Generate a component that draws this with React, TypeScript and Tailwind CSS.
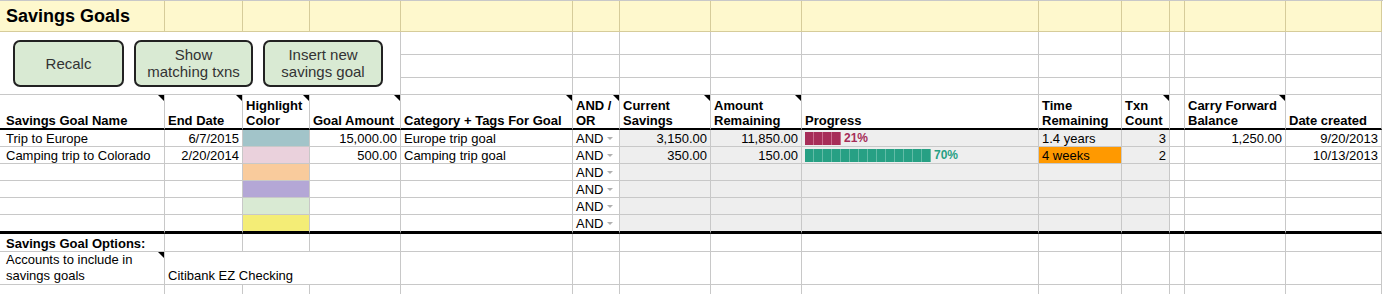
import React from "react";

type CellProps = {
  children?: React.ReactNode;
  className?: string;
  r?: string;
  b?: string;
  tri?: boolean;
};

function Cell({ children, className = "", r = "border-r border-r-[#c8c8c8]", b = "border-b border-b-[#c8c8c8]", tri }: CellProps) {
  return (
    <div className={"relative flex min-w-0 whitespace-nowrap " + r + " " + b + " " + className}>
      {children}
      {tri && (
        <span className="absolute right-0 top-0 h-0 w-0 border-l-[6px] border-t-[6px] border-l-transparent border-t-black" />
      )}
    </div>
  );
}

const GREY_B = "border-b border-b-[#c8c8c8]";
const HEAD_B = "border-b-2 border-b-black";
const LAST_B = "border-b-[3px] border-b-black";

function Btn({ children, w }: { children: React.ReactNode; w: string }) {
  return (
    <div
      className={
        "flex h-[47px] items-center justify-center rounded-[7px] border-2 border-[#222] bg-[#d9ead3] text-center text-[15px] leading-[17px] text-[#333] " +
        w
      }
    >
      {children}
    </div>
  );
}

function Bar({ n, fill, sep, text, tc }: { n: number; fill: string; sep: string; text: string; tc: string }) {
  const segs = Array.from({ length: n });
  return (
    <div className="flex items-center gap-[3px] pl-[3px]">
      <div className="flex h-[13px]">
        {segs.map((_, i) => (
          <div key={i} className={"h-full w-[9px] border-r " + fill + " " + sep} />
        ))}
      </div>
      <span className={"text-[12px] font-bold leading-[15px] " + tc}>{text}</span>
    </div>
  );
}

const colors = ["bg-[#a2c4c9]", "bg-[#ead1dc]", "bg-[#f9cb9c]", "bg-[#b4a7d6]", "bg-[#d9ead3]", "bg-[#f4ed76]"];

type Row = {
  name?: string;
  end?: string;
  goal?: string;
  cat?: string;
  cur?: string;
  rem?: string;
  prog?: React.ReactNode;
  time?: string;
  timeOrange?: boolean;
  txn?: string;
  carry?: string;
  created?: string;
};

const rows: Row[] = [
  {
    name: "Trip to Europe",
    end: "6/7/2015",
    goal: "15,000.00",
    cat: "Europe trip goal",
    cur: "3,150.00",
    rem: "11,850.00",
    prog: <Bar n={4} fill="bg-[#a62d58]" sep="border-r-[#c9698b]" text="21%" tc="text-[#a62d58]" />,
    time: "1.4 years",
    txn: "3",
    carry: "1,250.00",
    created: "9/20/2013",
  },
  {
    name: "Camping trip to Colorado",
    end: "2/20/2014",
    goal: "500.00",
    cat: "Camping trip goal",
    cur: "350.00",
    rem: "150.00",
    prog: <Bar n={14} fill="bg-[#27a084]" sep="border-r-[#62bba6]" text="70%" tc="text-[#27a084]" />,
    time: "4 weeks",
    timeOrange: true,
    txn: "2",
    created: "10/13/2013",
  },
  {},
  {},
  {},
  {},
];

const T = "text-[13px] leading-[15px] text-black";

export default function App() {
  return (
    <div className="h-[294px] w-[1383px] overflow-hidden bg-white font-['Liberation_Sans',Arial,sans-serif]">
      <div className="grid grid-cols-[165px_78px_67px_91px_172px_47px_91px_91px_237px_83px_48px_15px_101px_96px] grid-rows-[31px_23px_23px_17px_35px_17px_17px_17px_17px_17px_19px_18px_33px_17px] border-t border-t-[#c8c8c8]">
        {/* Title row */}
        {Array.from({ length: 14 }).map((_, i) => (
          <Cell
            key={"t" + i}
            r="border-r border-r-[#d6cc9a]"
            b="border-b border-b-[#d6cc9a]"
            className="items-center bg-[#fef8cd]"
          >
            {i === 0 && <span className="pl-[6px] text-[18px] font-bold leading-[21px] text-black">Savings Goals</span>}
          </Cell>
        ))}

        {/* Button area */}
        <Cell className="col-span-4 row-span-3 items-center gap-[10px] pl-[13px]">
          <Btn w="w-[111px]">Recalc</Btn>
          <Btn w="w-[119px]">
            Show
            <br />
            matching txns
          </Btn>
          <Btn w="w-[120px]">
            Insert new
            <br />
            savings goal
          </Btn>
        </Cell>
        {Array.from({ length: 30 }).map((_, i) => (
          <Cell key={"e" + i} />
        ))}

        {/* Header row */}
        <Cell b={HEAD_B} tri className={"items-end pl-[6px] font-bold " + T}>Savings Goal Name</Cell>
        <Cell b={HEAD_B} tri className={"items-end px-[3px] font-bold " + T}>End Date</Cell>
        <Cell b={HEAD_B} tri className={"items-end px-[3px] font-bold " + T}>
          <span>
            Highlight
            <br />
            Color
          </span>
        </Cell>
        <Cell b={HEAD_B} tri className={"items-end px-[3px] font-bold " + T}>Goal Amount</Cell>
        <Cell b={HEAD_B} tri className={"items-end px-[3px] font-bold " + T}>Category + Tags For Goal</Cell>
        <Cell b={HEAD_B} tri className={"items-end px-[3px] font-bold " + T}>
          <span>
            AND /
            <br />
            OR
          </span>
        </Cell>
        <Cell b={HEAD_B} tri className={"items-end px-[3px] font-bold " + T}>
          <span>
            Current
            <br />
            Savings
          </span>
        </Cell>
        <Cell b={HEAD_B} tri className={"items-end px-[3px] font-bold " + T}>
          <span>
            Amount
            <br />
            Remaining
          </span>
        </Cell>
        <Cell b={HEAD_B} className={"items-end px-[3px] font-bold " + T}>Progress</Cell>
        <Cell b={HEAD_B} className={"items-end px-[3px] font-bold " + T}>
          <span>
            Time
            <br />
            Remaining
          </span>
        </Cell>
        <Cell b={HEAD_B} tri className={"items-end px-[3px] font-bold " + T}>
          <span>
            Txn
            <br />
            Count
          </span>
        </Cell>
        <Cell b={HEAD_B} />
        <Cell b={HEAD_B} tri className={"items-end px-[3px] font-bold " + T}>
          <span>
            Carry Forward
            <br />
            Balance
          </span>
        </Cell>
        <Cell b={HEAD_B} className={"items-end px-[3px] font-bold " + T}>Date created</Cell>

        {/* Data rows */}
        {rows.map((r, i) => {
          const b = i === rows.length - 1 ? LAST_B : GREY_B;
          return (
            <React.Fragment key={"r" + i}>
              <Cell b={b} className={"items-end pl-[6px] " + T}>{r.name}</Cell>
              <Cell b={b} className={"items-end justify-end px-[3px] " + T}>{r.end}</Cell>
              <Cell b={b} className={colors[i]} />
              <Cell b={b} className={"items-end justify-end px-[3px] " + T}>{r.goal}</Cell>
              <Cell b={b} className={"items-end px-[3px] " + T}>{r.cat}</Cell>
              <Cell b={b} className={"items-end px-[3px] " + T}>
                AND
                <span className="absolute right-[6px] top-[7px] h-0 w-0 border-l-[3px] border-r-[3px] border-t-[3px] border-l-transparent border-r-transparent border-t-[#b0b0b0]" />
              </Cell>
              <Cell b={b} className={"items-end justify-end bg-[#eeeeee] px-[3px] " + T}>{r.cur}</Cell>
              <Cell b={b} className={"items-end justify-end bg-[#eeeeee] px-[3px] " + T}>{r.rem}</Cell>
              <Cell b={b} className="items-center bg-[#eeeeee]">{r.prog}</Cell>
              <Cell b={b} className={"items-end px-[3px] " + (r.timeOrange ? "bg-[#ff9900] " : "bg-[#eeeeee] ") + T}>{r.time}</Cell>
              <Cell b={b} className={"items-end justify-end bg-[#eeeeee] px-[3px] " + T}>{r.txn}</Cell>
              <Cell b={b} />
              <Cell b={b} className={"items-end justify-end px-[3px] " + T}>{r.carry}</Cell>
              <Cell b={b} className={"items-end justify-end px-[3px] " + T}>{r.created}</Cell>
            </React.Fragment>
          );
        })}

        {/* Options row */}
        <Cell className={"items-end pl-[6px] font-bold " + T}>Savings Goal Options:</Cell>
        {Array.from({ length: 13 }).map((_, i) => (
          <Cell key={"o" + i} />
        ))}

        {/* Accounts row */}
        <Cell tri className="items-end pl-[6px] text-[13px] leading-[16px] text-black">
          <span>
            Accounts to include in
            <br />
            savings goals
          </span>
        </Cell>
        <Cell className="col-span-3 items-end px-[3px] text-[13px] leading-[16px] text-black">Citibank EZ Checking</Cell>
        {Array.from({ length: 10 }).map((_, i) => (
          <Cell key={"a" + i} />
        ))}

        {/* Last row */}
        {Array.from({ length: 14 }).map((_, i) => (
          <Cell key={"l" + i} />
        ))}
      </div>
    </div>
  );
}
